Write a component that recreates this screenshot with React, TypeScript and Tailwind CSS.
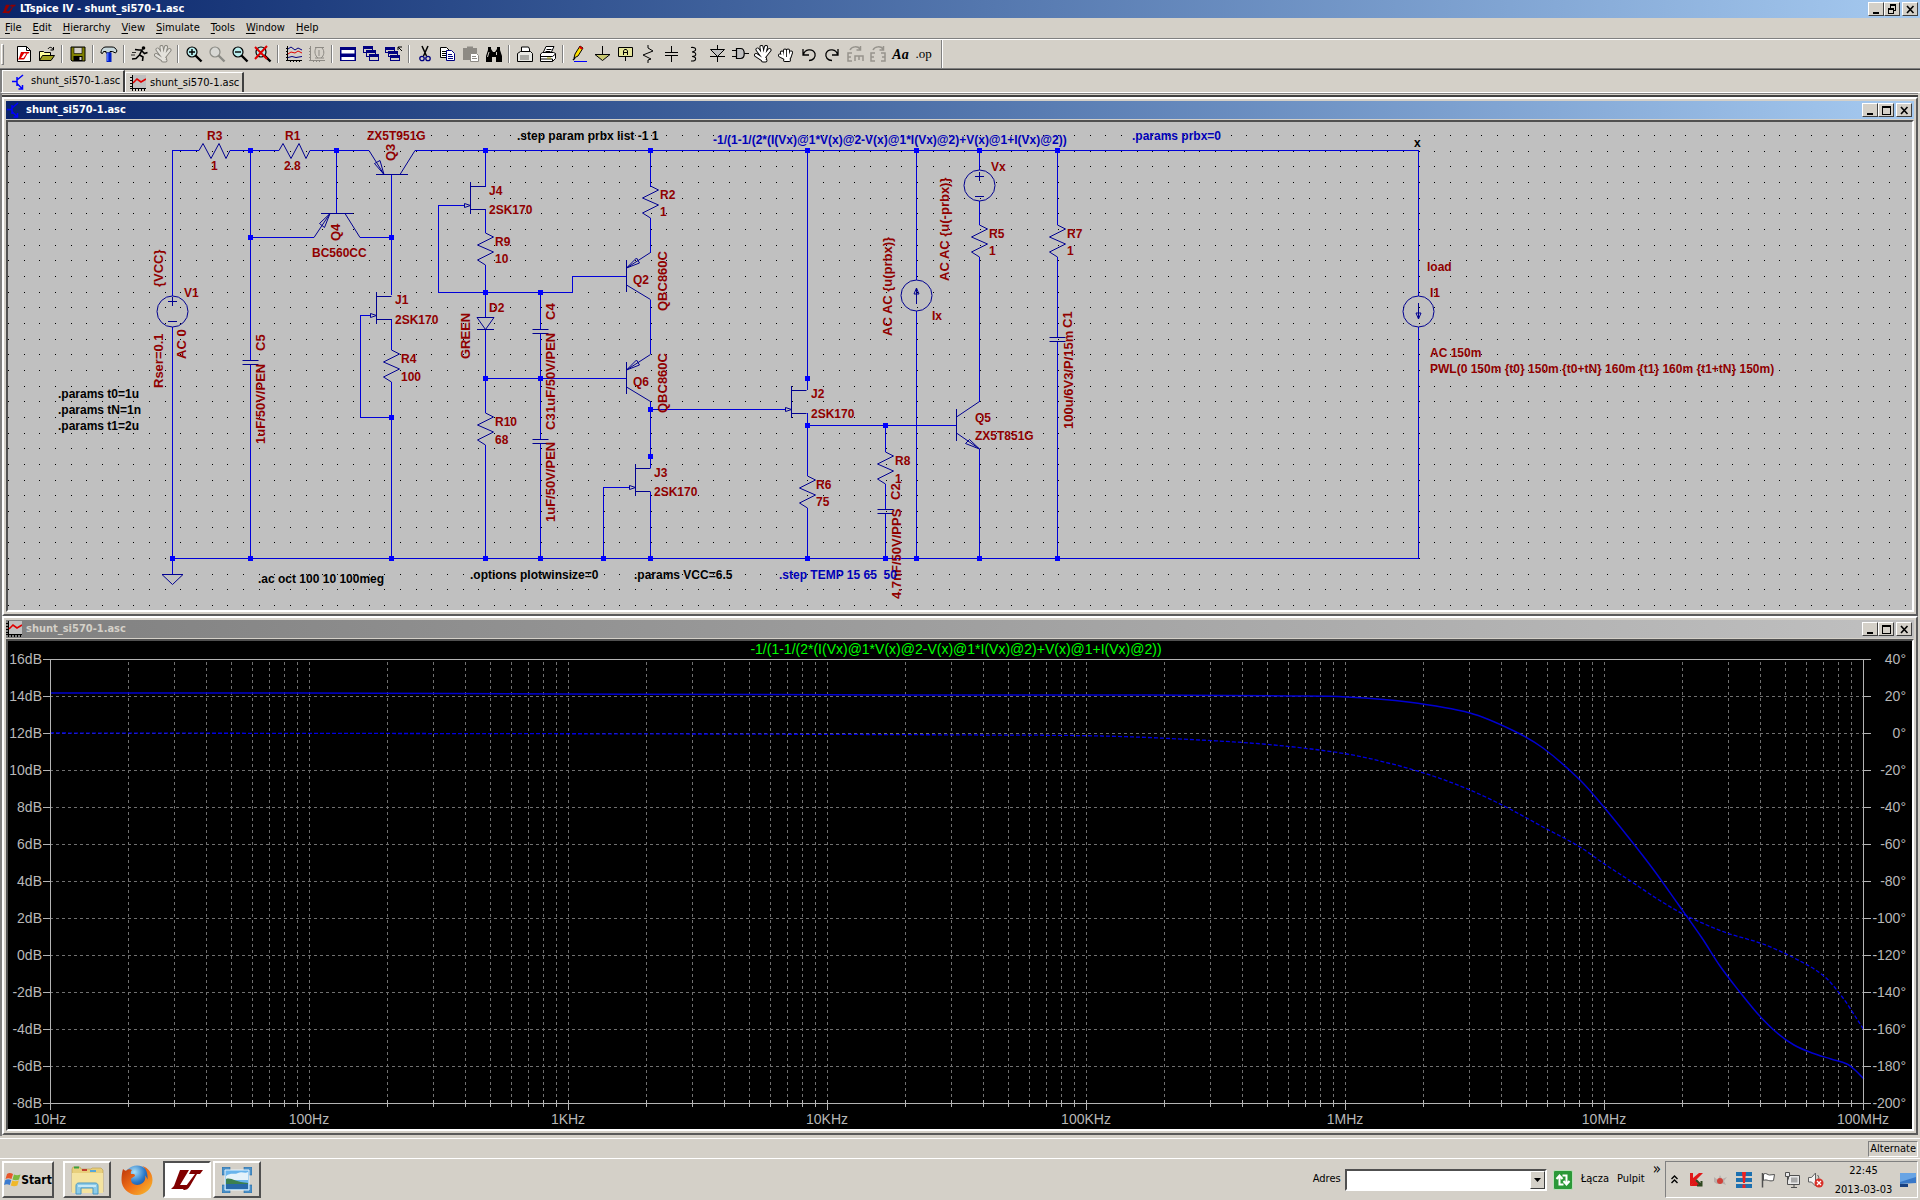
import React from "react";

type P = [number, number];

/* ---------- shared window chrome ---------- */

const RAISED = "border border-t-white border-l-white border-b-[#404040] border-r-[#404040]";
const UI = "font-['DejaVu_Sans_Condensed','DejaVu_Sans',sans-serif]";

function WinButton({ kind, label }: { kind: "min" | "max" | "restore" | "close"; label: string }) {
  return (
    <button
      type="button"
      aria-label={label}
      className={`flex h-[14px] w-4 items-center justify-center bg-[#d4d0c8] ${RAISED} ${kind === "close" ? "ml-[2px]" : ""}`}
    >
      <svg width="12" height="11" viewBox="0 0 12 11" shapeRendering="crispEdges" fill="none" stroke="#000">
        {kind === "min" && <path d="M3 9h6" strokeWidth="2" />}
        {kind === "max" && (
          <>
            <path d="M2 2h9" strokeWidth="2" />
            <path d="M2.5 2v7.500h8v-7.500" />
          </>
        )}
        {kind === "restore" && (
          <>
            <path d="M4.500 1v3M9.500 1v5.500h-1.500" />
            <path d="M4 1h6M2 5h6" strokeWidth="2" />
            <path d="M2.500 4v5.500h5v-5.500" />
          </>
        )}
        {kind === "close" && <path d="M3 2l6.500 7M9.500 2l-6.500 7" strokeWidth="1.600" shapeRendering="auto" />}
      </svg>
    </button>
  );
}

/* ---------- toolbar icons, 18 x 18 ---------- */

const NAVY = "#000080";

function Lens({ gray, children }: { gray?: boolean; children?: React.ReactNode }) {
  const c = gray ? "#8a8a84" : "#000";
  return (
    <>
      <circle cx="7" cy="7" r="5" fill={gray ? "#d8d8d4" : "#b8ecec"} stroke={c} strokeWidth="1.200" />
      <path d="M10.500 10.500l6 6" stroke={c} strokeWidth="2.400" />
      {children}
    </>
  );
}

const OPEN_HAND = "M9 12L3.500 4.500M9 12L7.500 2M9.500 12L12 2M10 12L15.500 5M8 14L2 10M8 13.500h3M9 15.500h2.500";
const FIST = "M6 12L5 7.500M8 12V5.500M11 12V5.500M12.500 12L14 7.500M8 13L3 10.500M7.500 13h4.500M8 15h4";

function Hand({ d, line = "#000", fill = "#fff" }: { d: string; line?: string; fill?: string }) {
  return (
    <g fill="none" strokeLinecap="round">
      <path d={d} stroke={line} strokeWidth="4" />
      <path d={d} stroke={fill} strokeWidth="2.200" />
    </g>
  );
}

const ICONS: Record<string, React.ReactNode> = {
  new: (
    <>
      <path d="M2.500 1.500h9l4 4v11h-13z" fill="#fff" stroke="#000" />
      <path d="M11.500 1.500v4h4" fill="none" stroke="#000" />
      <path d="M6 7h4l-4 6h3l-1 1.500h-5l1-1.500zM9.500 7h5l-1 1.500h-1l-2.500 4.500c-.5 1-1 1.500-2.500 1.500l4-6h-2z" fill="#e00000" />
    </>
  ),
  open: (
    <>
      <path d="M1.500 15.500v-9h4l1 1h6v3" fill="#ffff9c" stroke="#000" />
      <path d="M1.500 15.500l3-5h12l-3.500 5z" fill="#a0a020" stroke="#000" />
      <path d="M10 4c1.500-2.500 4-2 5 .5M15.500 2v3h-3" fill="none" stroke="#000" />
    </>
  ),
  save: (
    <>
      <path d="M2 2h14v14h-13l-1-1z" fill="#808000" stroke="#000" />
      <path d="M5 2.500h8v6h-8z" fill="#d4d0c8" stroke="#000" strokeWidth=".6" />
      <path d="M4.500 11h9v5h-9z" fill="#000" />
      <path d="M10.500 12h2v3h-2z" fill="#d4d0c8" />
    </>
  ),
  hammer: (
    <>
      <path d="M1 8c0-3.500 2-6 5-6h6c2.500 0 4 1.500 5 4l-1.500 2-3-1.500h-2.500v1.500h-4v-1.500h-2.500l-1 2z" fill="#c8d8dc" stroke="#000" />
      <path d="M6.500 7.500h5v9.500h-5z" fill="#0020c8" />
      <path d="M7 8h1.500v8h-1.500z" fill="#4868ff" />
    </>
  ),
  run: (
    <>
      <circle cx="12.500" cy="3" r="1.800" fill="#000" />
      <path d="M4 4.500l4 .5 3 0-2.500 5 3.500 2-.5 4M8.500 10l-3.500 3.500-4 .5M11 6l2.500 2.500 3-1" fill="none" stroke="#000" strokeWidth="1.600" />
      <path d="M1 7.500h4M0 10h4" stroke="#000" strokeWidth=".8" />
    </>
  ),
  halt: <Hand d={OPEN_HAND} line="#85837c" fill="#e4e2dc" />,
  zoomin: <Lens><path d="M4 7h6M7 4v6" stroke="#000" strokeWidth="1.400" /></Lens>,
  pan: <Lens gray />,
  zoomout: <Lens><path d="M4 7h6" stroke="#000" strokeWidth="1.400" /></Lens>,
  zoomfit: <Lens><path d="M1 2l12 12M13 1l-12 13" stroke="#e00000" strokeWidth="2" /></Lens>,
  wave: (
    <>
      <path d="M2.500 1v15M1 3.500h2M1 6.500h2M1 9.500h2M1 12.500h2M1 15.500h16M5.500 15v2M8.500 15v2M11.500 15v2M14.500 15v2" stroke="#000" fill="none" />
      <path d="M3 4l3-2 4 3 3-2 4 2" stroke={NAVY} fill="none" />
      <path d="M3 9l3-2 4 1 3-2 4 2" stroke="#e00000" fill="none" />
      <path d="M3 12.500l4-1 4 1 6-1" stroke={NAVY} fill="none" />
    </>
  ),
  wavegray: (
    <path d="M2.500 1v15M1 3.500h2M1 6.500h2M1 9.500h2M1 12.500h2M1 15.500h16M5.500 15v2M8.500 15v2M11.500 15v2M7 2.500h9M8 3c-2 3-1 8 2 10M14 3c3 3 2 8-1 10M7 13h9M11 5v6" stroke="#8d8a84" fill="none" />
  ),
  tile: (
    <>
      <path d="M1 2h16v14h-16z" fill={NAVY} />
      <path d="M2.500 5h13v3.500h-13zM2.500 12h13v3h-13z" fill="#fff" />
    </>
  ),
  cascade: (
    <>
      {[[1, 1], [4, 5], [7, 9]].map(([x, y]) => (
        <React.Fragment key={x}>
          <path d={`M${x} ${y}h10v7h-10z`} fill={NAVY} />
          <path d={`M${x + 1} ${y + 3}h8v3h-8z`} fill="#d4d0c8" />
        </React.Fragment>
      ))}
    </>
  ),
  closeall: (
    <>
      {[[0, 2], [3, 6], [5, 10]].map(([x, y]) => (
        <React.Fragment key={x}>
          <path d={`M${x} ${y}h10v6h-10z`} fill={NAVY} />
          <path d={`M${x + 1} ${y + 3}h8v2h-8z`} fill="#d4d0c8" />
        </React.Fragment>
      ))}
      <path d="M17 6l-4-4M13 5v-3h4" stroke="#000" fill="none" />
    </>
  ),
  cut: (
    <>
      <path d="M6 1l4.500 10M12 1l-4.500 10" stroke="#000" strokeWidth="1.500" />
      <circle cx="6" cy="13.500" r="2.200" fill="none" stroke={NAVY} strokeWidth="1.300" />
      <circle cx="12" cy="13.500" r="2.200" fill="none" stroke={NAVY} strokeWidth="1.300" />
    </>
  ),
  copy: (
    <>
      <path d="M1.500 2.500h6l3 3v7h-9z" fill="#fff" stroke="#000" />
      <path d="M3 6.500h4M3 8.500h4M3 10.500h4" stroke="#000" />
      <path d="M7.500 5.500h5l3 3v7h-8z" fill="#fff" stroke={NAVY} />
      <path d="M9 9.500h4M9 11.500h5M9 13.500h5" stroke={NAVY} />
    </>
  ),
  paste: (
    <>
      <path d="M1 3h14v12h-14z" fill="#8d8a84" />
      <path d="M5 1.500h6v3h-6z" fill="#8d8a84" />
      <path d="M8.500 8.500h6l2 2v6h-8z" fill="#fff" stroke="#8d8a84" />
      <path d="M10 11.500h4M10 13.500h5" stroke="#8d8a84" />
    </>
  ),
  find: (
    <>
      <path d="M3 2h3v2l2 3h2l2-3v-2h3v3l2 6v6h-6v-5h-4v5h-6v-6l2-6z" fill="#000" />
      <path d="M4 7l-1.500 5M11.500 7v3" stroke="#d4d0c8" />
    </>
  ),
  setup: (
    <>
      <path d="M5.500 7v-5h7l1 2v3" fill="#fff" stroke="#000" />
      <path d="M1.500 8.500l3-2h10l2 2v8h-15z" fill="#e8e8e4" stroke="#000" />
      <path d="M4 10h9v5h-9z" fill="#a8a8a4" />
    </>
  ),
  print: (
    <>
      <path d="M4 8l3-6.500h8l-3 6.500z" fill="#fff" stroke="#000" />
      <path d="M7.500 4.500h5M6.500 6.500h5" stroke="#000" />
      <path d="M1.500 9l2-1.500h11l2 1v5l-3 3h-12z" fill="#fff" stroke="#000" />
      <path d="M1.500 11.500h12l3-2.500M2 14h11.500v2.500" stroke="#000" fill="none" />
      <path d="M8 13h4" stroke="#a0a000" />
    </>
  ),
  wire: (
    <>
      <path d="M4 13l1-4 5-8 3 2-5 8z" fill="#ffe000" stroke="#000" />
      <path d="M10 1l3 2-1 1.500-3-1.500z" fill="#e00000" />
      <path d="M4 16.500h13" stroke="#0000ff" />
      <path d="M3 15l2-2" stroke="#000" strokeWidth="1.500" />
    </>
  ),
  ground: (
    <>
      <path d="M9.500 1v8" stroke="#000" />
      <path d="M2 9.500h15l-7.500 6z" fill="#c8c870" stroke="#000" />
    </>
  ),
  label: (
    <>
      <path d="M2.500 2.500h14v9h-14zM9.500 12v4" fill="#e4e49a" stroke="#000" />
      <path d="M7.500 10v-4l1-1.500h2l1 1.500v4M7.500 7.500h4" fill="none" stroke="#000" />
    </>
  ),
  res: <path d="M9 0v3l5 3-10 4 8 4-3 1v3" fill="none" stroke="#000" />,
  cap: <path d="M9.500 1v6M3 7.500h13M3 10.500h13M9.500 11v6" fill="none" stroke="#000" />,
  ind: <path d="M6 2.500c6-1 6 4 1 4.500 5 0 5 4.500 0 4.500 5 0 5 5-1 4.500" fill="none" stroke="#000" strokeWidth="1.100" />,
  diode: (
    <>
      <path d="M9.500 0v17M2 11.500h15" stroke="#000" />
      <path d="M2.500 4.500h14l-7 7z" fill="#c0c0c0" stroke="#000" />
    </>
  ),
  gate: (
    <>
      <path d="M1 5.500h4M1 11.500h4M13 8.500h5" stroke="#000" />
      <path d="M5.500 3.500h4c5 0 5 10 0 10h-4z" fill="#c0c0c0" stroke="#000" strokeWidth="1.200" />
    </>
  ),
  move: <Hand d={OPEN_HAND} />,
  drag: <Hand d={FIST} />,
  undo: <path d="M3 4v6h6M3.500 9.500c1-5 9-7 11.500-1 1 4-2 7-6 7" fill="none" stroke="#000" strokeWidth="1.300" />,
  redo: <path d="M15 4v6h-6M14.500 9.500c-1-5-9-7-11.500-1-1 4 2 7 6 7" fill="none" stroke="#000" strokeWidth="1.300" />,
  rotate: (
    <path d="M6 16h-4v-8h4M2 12h3M9 16v-5h8v5M13 11v4M4 5c2-4 8-4 10-1M14.500 1v4h-4" fill="none" stroke="#96938c" strokeWidth="1.500" />
  ),
  mirror: (
    <path d="M6 16h-4v-8h4M2 12h3M12 16h4v-8h-4M16 12h-3M4 5c2-4 8-4 10-1M14.500 1v4h-4" fill="none" stroke="#96938c" strokeWidth="1.500" />
  ),
};

const TOOL_GROUPS: [string, string][][] = [
  [["new", "New schematic"], ["open", "Open"]],
  [["save", "Save"]],
  [["hammer", "Control panel"]],
  [["run", "Run"], ["halt", "Halt"]],
  [["zoomin", "Zoom in"], ["pan", "Pan"], ["zoomout", "Zoom out"], ["zoomfit", "Zoom to fit"]],
  [["wave", "Autorange"], ["wavegray", "Pick visible traces"]],
  [["tile", "Tile windows"], ["cascade", "Cascade windows"], ["closeall", "Close all"]],
  [["cut", "Cut"], ["copy", "Copy"], ["paste", "Paste"], ["find", "Find"]],
  [["setup", "Print setup"], ["print", "Print"]],
  [
    ["wire", "Wire"], ["ground", "Ground"], ["label", "Label net"], ["res", "Resistor"], ["cap", "Capacitor"],
    ["ind", "Inductor"], ["diode", "Diode"], ["gate", "Component"], ["move", "Move"], ["drag", "Drag"],
    ["undo", "Undo"], ["redo", "Redo"], ["rotate", "Rotate"], ["mirror", "Mirror"], ["text", "Text"], ["op", "SPICE directive"],
  ],
];

function Toolbar() {
  return (
    <div role="toolbar" className="flex h-7 items-center pl-px">
      <span className="mr-2 h-[21px] w-[3px] border border-t-white border-r-[#808080] border-b-[#808080] border-l-white" />
      {TOOL_GROUPS.map((group, i) => (
        <div key={i} className="flex items-center">
          {i > 0 && <span className="mx-[3px] h-[18px] w-[2px] border-r border-l border-l-[#808080] border-r-white" />}
          {group.map(([id, label]) => (
            <button key={id} type="button" aria-label={label} className="flex h-6 w-[23px] items-center justify-center">
              {id === "text" ? (
                <span className="font-['Liberation_Serif',serif] text-[14px] font-bold italic">Aa</span>
              ) : id === "op" ? (
                <span className="font-['Liberation_Serif',serif] text-[13px]">.op</span>
              ) : (
                <svg width="18" height="18" viewBox="0 0 18 18">{ICONS[id]}</svg>
              )}
            </button>
          ))}
        </div>
      ))}
      <span className="ml-[6px] h-7 w-[2px] border-r border-l border-l-[#808080] border-r-white" />
    </div>
  );
}

/* ---------- small document icons ---------- */

function SchematicIcon() {
  return (
    <svg width="16" height="16" viewBox="0 0 16 16" fill="none" stroke="#0000ff" strokeWidth="1.500">
      <path d="M1 7.500h5M6 3v9M6 6l6-5M6 9.500l5 5M11.500 11v4h-4" />
    </svg>
  );
}

function PlotIcon() {
  return (
    <svg width="16" height="16" viewBox="0 0 16 16">
      <path d="M2 0h14v13h-14z" fill="#c0c0c0" />
      <path d="M2.500 0v16M0 2.500h2M0 5.500h2M0 8.500h2M0 11.500h2M0 13.500h16M5.500 14v2M8.500 14v2M11.500 14v2M14.500 14v2" stroke="#000" fill="none" />
      <path d="M3 8l4-4 4 3 5-3" stroke="#e00000" strokeWidth="1.600" fill="none" />
    </svg>
  );
}

/* ---------- schematic ---------- */

const GRID = (() => {
  let d = "";
  for (let r = 0; r <= 30; r++)
    for (let c = 0; c <= 121; c++)
      d += `M${Math.round(8 + c * 15.675)} ${Math.round(135 + r * 15.667) + 0.5}h1`;
  return d;
})();

const WIRES = [
  "M172 150.500H199M230 150.500H279M310 150.500H369M415 150.500H1418.500V296M172.500 150V296M172.500 327V574",
  "M172 558.500H1418.500V327M250.500 150V360M250.500 365V558M336.500 150V213M391.500 174V295M391.500 319V350M391.500 382V558",
  "M250 237.500H314M360 237.500H391M371 315.500H360.500V417.500H391M485.500 150V187M485.500 209V233M485.500 265V317M485.500 330V413M485.500 445V558",
  "M465 205.500H438.500V292.500H572.500V276.500H626M540.500 292V329M540.500 334V439M540.500 443V558M485 378.500H626",
  "M650.500 150V187M650.500 218V253M650.500 300V354M650.500 401V468M650.500 492V558M629 487.500H603.500V558M650 409.500H786",
  "M807.500 150V390M807.500 413V476M807.500 508V558M807 425.500H956M885.500 425V452M885.500 484V509M885.500 514V558",
  "M916.500 150V280M916.500 311V558M979.500 150V170M979.500 201V225M979.500 257V402M979.500 449V558M1057.500 150V225M1057.500 257V337M1057.500 342V558",
].join("");

const resV = (x: number, y: number) => `M${x} ${y}l8 4l-16 8l16 7l-16 8l8 5`;
const resH = (x: number, y: number) => `M${x} ${y}l4 -7l8 15l8 -15l7 15l4 -8`;
const capV = (x: number, y: number) => `M${x - 8} ${y}h16M${x - 8} ${y + 4}h16`;
const jfet = (x: number, y: number) =>
  `M${x} ${y}v32M${x} ${y + 4.5}h15M${x} ${y + 27.5}h15M${x - 6} ${y + 21.5}l0 4l6 -2l-6 -2z`;
const pnp = (x: number, y: number) =>
  `M${x} ${y}v32M${x} ${y + 8}L${x + 24} ${y - 7.500}M${x} ${y + 25}L${x + 24} ${y + 39.500}M${x} ${y + 8}L${x + 10} ${y - 2}L${x + 13} ${y + 3}z`;

const PARTS = [
  resH(199, 150.5), resH(279, 150.5), resV(391.5, 350), resV(485.5, 233), resV(485.5, 413), resV(650.5, 186),
  resV(807.5, 476), resV(885.5, 452), resV(979.5, 225), resV(1057.5, 225),
  capV(250.5, 360.5), capV(540.5, 329.5), capV(540.5, 439.5), capV(885.5, 509.5), capV(1057.5, 337.5),
  jfet(376.5, 292), jfet(470.5, 182), jfet(635.5, 464), jfet(791.5, 386),
  pnp(626.5, 260), pnp(626.5, 362),
  "M376 174.500H408M369 150.500L384 174.500L380 160.500L374.500 163.500L384 174.500M400 174.500L415 150.500",
  "M321 213.500H353M314 237.500L330 213.500L319.500 223.500L324.500 227.500L330 213.500M345 213.500L360 237.500",
  "M956.500 409V441M956.500 417L979.500 401.500M956.500 433L979.500 449L969.500 439.500L965.500 443.500L979.500 449",
  "M477 317.500H494L485.500 329.500ZM477 329.500H494",
  "M168 301.500H177M172.500 297V306M168 321.500H177M975 176.500H984M979.500 172V181M975 196.500H984",
  "M916.500 304V288L914 294H919L916.500 288M1418.500 303V319L1416 313H1421L1418.500 319",
  "M162 574.500H183L172.500 584.500Z",
].join("");

const NODES: P[] = [
  ...[250, 336, 485, 650, 807, 916, 979, 1057].map((x): P => [x, 150]),
  ...[172, 250, 391, 485, 540, 603, 650, 807, 885, 916, 979, 1057].map((x): P => [x, 558]),
  [250, 237], [391, 237], [391, 417], [485, 292], [540, 292], [485, 378], [540, 378],
  [650, 409], [650, 456], [807, 378], [807, 425], [885, 425],
];

const RED_LABELS: [number, number, string][] = [
  [207, 140, "R3"], [211, 170, "1"], [285, 140, "R1"], [284, 170, "2.8"], [367, 140, "ZX5T951G"], [312, 257, "BC560CC"],
  [184, 297, "V1"], [395, 304, "J1"], [395, 324, "2SK170"], [401, 363, "R4"], [401, 381, "100"],
  [489, 195, "J4"], [489, 214, "2SK170"], [495, 246, "R9"], [495, 263, "10"], [489, 312, "D2"],
  [495, 426, "R10"], [495, 444, "68"], [660, 199, "R2"], [660, 216, "1"], [633, 284, "Q2"], [633, 386, "Q6"],
  [654, 477, "J3"], [654, 496, "2SK170"], [811, 398, "J2"], [811, 418, "2SK170"], [816, 489, "R6"], [816, 506, "75"],
  [895, 465, "R8"], [895, 483, "1"], [991, 171, "Vx"], [989, 238, "R5"], [989, 255, "1"], [1067, 238, "R7"],
  [1067, 255, "1"], [932, 320, "Ix"], [975, 422, "Q5"], [975, 440, "ZX5T851G"], [1427, 271, "load"],
  [1430, 297, "I1"], [1430, 357, "AC 150m"],
  [1430, 373, "PWL(0 150m {t0} 150m {t0+tN} 160m {t1} 160m {t1+tN} 150m)"],
];

const VERTICAL_LABELS: [number, number, string][] = [
  [163, 287, "{VCC}"], [186, 359, "AC 0"], [163, 388, "Rser=0.1"], [265, 351, "C5"], [265, 444, "1uF/50V/PEN"],
  [395, 161, "Q3"], [340, 241, "Q4"], [470, 359, "GREEN"], [555, 320, "C4"], [555, 413, "1uF/50V/PEN"],
  [555, 430, "C3"], [555, 522, "1uF/50V/PEN"], [667, 311, "QBC860C"], [667, 413, "QBC860C"],
  [892, 336, "AC AC {u(prbx)}"], [949, 281, "AC AC {u(-prbx)}"], [1072, 328, "C1"], [1073, 429, "100u/6V3/P/15m"],
  [900, 500, "C2"], [901, 599, "4.7nF/50V/PPS"],
];

const DIRECTIVES: [number, number, string, boolean][] = [
  [517, 140, ".step param prbx list -1 1", false],
  [713, 144, "-1/(1-1/(2*(I(Vx)@1*V(x)@2-V(x)@1*I(Vx)@2)+V(x)@1+I(Vx)@2))", true],
  [1132, 140, ".params prbx=0", true],
  [1414, 147, "x", false],
  [58, 398, ".params t0=1u", false], [58, 414, ".params tN=1n", false], [58, 430, ".params t1=2u", false],
  [258, 583, ".ac oct 100 10 100meg", false], [470, 579, ".options plotwinsize=0", false],
  [634, 579, ".params VCC=6.5", false], [779, 579, ".step TEMP 15 65  50", true],
];

function Schematic() {
  return (
    <svg className="block h-[488px] w-full bg-[#c0c0c0] font-['Liberation_Sans',Arial,sans-serif] text-[12px] font-bold">
      <g transform="translate(-8 -122)">
        <path d={GRID} stroke="#000" shapeRendering="crispEdges" />
        <path d={WIRES} stroke="#0000d8" fill="none" shapeRendering="crispEdges" />
        <g stroke="#000090" fill="none" strokeWidth="1">
          <path d={PARTS} />
          <circle cx="172.500" cy="311.500" r="15.500" />
          <circle cx="916.500" cy="295.500" r="15.500" />
          <circle cx="979.500" cy="185.500" r="15.500" />
          <circle cx="1418.500" cy="311.500" r="15.500" />
        </g>
        {NODES.map(([x, y]) => (
          <rect key={`${x}-${y}`} x={x - 2} y={y - 2} width="5" height="5" fill="#0000ff" />
        ))}
        <g fill="#900000">
          {RED_LABELS.map(([x, y, t]) => (
            <text key={`${x}-${y}`} x={x} y={y}>{t}</text>
          ))}
        </g>
        <g fill="#900000" className="text-[13px]">
          {VERTICAL_LABELS.map(([x, y, t]) => (
            <text key={`${x}-${y}`} transform={`translate(${x} ${y}) rotate(-90)`}>{t}</text>
          ))}
        </g>
        {DIRECTIVES.map(([x, y, t, blue]) => (
          <text key={`${x}-${y}`} x={x} y={y} fill={blue ? "#0000b8" : "#000"} className="whitespace-pre">{t}</text>
        ))}
      </g>
    </svg>
  );
}

/* ---------- waveform plot ---------- */

const X0 = 50;
const X1 = 1863;
const Y0 = 659;
const Y1 = 1103;
const DECADE = 259;
const ROW = 37;

const GAIN: P[] = [
  [50, 693], [300, 693], [560, 694], [900, 695], [1150, 695], [1290, 696], [1347, 697], [1408, 702], [1470, 713],
  [1512, 730], [1543, 748], [1580, 780], [1603, 806], [1629, 838], [1653, 869], [1678, 904], [1702, 938], [1720, 966],
  [1739, 991], [1757, 1013], [1776, 1032], [1794, 1045], [1812, 1053], [1831, 1059], [1847, 1064], [1855, 1070], [1864, 1079],
];
const PHASE: P[] = [
  [50, 733], [700, 734], [980, 735], [1102, 736], [1200, 740], [1274, 745], [1347, 754], [1396, 765], [1433, 776],
  [1470, 790], [1506, 807], [1543, 827], [1580, 847], [1603, 863], [1635, 884], [1659, 900], [1687, 916], [1727, 933],
  [1763, 944], [1800, 961], [1825, 977], [1843, 998], [1855, 1016], [1864, 1030],
];

function smooth(p: P[]) {
  let d = `M${p[0][0]} ${p[0][1]}`;
  for (let i = 0; i < p.length - 1; i++) {
    const a = p[Math.max(0, i - 1)];
    const b = p[i];
    const c = p[i + 1];
    const e = p[Math.min(p.length - 1, i + 2)];
    const w = (c[0] - b[0]) / 3;
    const s1 = (c[1] - a[1]) / (c[0] - a[0]);
    const s2 = (e[1] - b[1]) / (e[0] - b[0]);
    d += `C${b[0] + w} ${b[1] + w * s1} ${c[0] - w} ${c[1] - w * s2} ${c[0]} ${c[1]}`;
  }
  return d;
}

const rows = Array.from({ length: 13 }, (_, i) => i);
const decades = ["10Hz", "100Hz", "1KHz", "10KHz", "100KHz", "1MHz", "10MHz", "100MHz"];

const GRID_V = decades
  .slice(0, 7)
  .flatMap((_, d) => [1, 2, 3, 4, 5, 6, 7, 8, 9].map((k) => Math.round(X0 + DECADE * (d + Math.log10(k)))))
  .filter((x) => x > X0);

function Plot() {
  return (
    <svg className="block h-[488px] w-full bg-black font-['Liberation_Sans',Arial,sans-serif] text-[14px]">
      <g transform="translate(-8 -641)">
        <g stroke="#707070" strokeDasharray="3 3" shapeRendering="crispEdges" fill="none">
          <path d={GRID_V.map((x) => `M${x + 0.5} ${Y0 + 3}V${Y1}`).join("")} />
          <path d={rows.slice(1, 12).map((i) => `M${X0} ${Y0 + i * ROW + 0.5}H${X1}`).join("")} />
        </g>
        <path d={smooth(GAIN)} fill="none" stroke="#0000d0" strokeWidth="1.500" />
        <path d={smooth(PHASE)} fill="none" stroke="#0000e0" strokeWidth="1.300" strokeDasharray="4 2" />
        <g stroke="#b4b4b4" fill="none" shapeRendering="crispEdges">
          <path d={`M43 ${Y0 + 0.5}H1871M43 ${Y1 + 0.5}H1871M${X0 + 0.5} ${Y0}V1110M${X1 + 0.5} ${Y0}V1110`} />
          <path d={rows.map((i) => `M43 ${Y0 + i * ROW + 0.5}H${X0}M${X1} ${Y0 + i * ROW + 0.5}H1871`).join("")} />
          <path d={GRID_V.map((x) => `M${x + 0.5} 1100V${(x - X0) % DECADE === 0 ? 1110 : 1107}`).join("")} />
        </g>
        <g fill="#b8b8b8">
          {rows.map((i) => (
            <React.Fragment key={i}>
              <text x="42" y={Y0 + i * ROW + 5} textAnchor="end">{`${16 - 2 * i}dB`}</text>
              <text x="1906" y={Y0 + i * ROW + 5} textAnchor="end">{`${40 - 20 * i}°`}</text>
            </React.Fragment>
          ))}
          {decades.map((t, i) => (
            <text key={t} x={X0 + i * DECADE} y="1124" textAnchor="middle">{t}</text>
          ))}
        </g>
        <text x="956" y="654" textAnchor="middle" fill="#00ff00">
          -1/(1-1/(2*(I(Vx)@1*V(x)@2-V(x)@1*I(Vx)@2)+V(x)@1+I(Vx)@2))
        </text>
      </g>
    </svg>
  );
}

function DocWindow({ active, icon, children }: { active: boolean; icon: React.ReactNode; children: React.ReactNode }) {
  return (
    <section className="border-2 border-t-white border-r-[#5a5a5a] border-b-[#5a5a5a] border-l-white bg-[#d4d0c8] p-[2px]">
      <header
        className={`flex h-[18px] items-center gap-1 pr-[2px] pl-1 text-[11px] font-bold ${
          active
            ? "bg-linear-to-r from-[#0a246a] to-[#a6caf0] text-white"
            : "bg-linear-to-r from-[#808080] to-[#c0c0c0] text-[#d4d0c8]"
        }`}
      >
        <span className="-ml-1">{icon}</span>
        <h2 className="flex-1">shunt_si570-1.asc</h2>
        <div className="flex">
          <WinButton kind="min" label="Minimize document" />
          <WinButton kind="max" label="Maximize document" />
          <WinButton kind="close" label="Close document" />
        </div>
      </header>
      <div className="mt-px border-2 border-t-[#505050] border-r-white border-b-white border-l-[#505050]">{children}</div>
    </section>
  );
}

/* ---------- taskbar ---------- */

function WindowsFlag() {
  return (
    <svg width="17" height="16" viewBox="0 0 17 16">
      <path d="M3 2c2-1.500 4-1 6 0l-1.500 5c-2-1-4-1.200-6 0z" fill="#e8562a" />
      <path d="M10 2.500c2 1 4 1 6.500 0l-1.500 5c-2 1-4.500 1-6.500 0z" fill="#7cb83c" />
      <path d="M1.300 8c2-1.300 4-1 6 0l-1.500 5c-2-1-3.800-1-5.800 0z" fill="#3c7cd0" />
      <path d="M8.300 8.500c2 1 4 1 6.500 0l-1.500 5c-2 1-4.500 1-6.500 0z" fill="#f0b828" />
    </svg>
  );
}

function FolderIcon() {
  return (
    <svg width="34" height="30" viewBox="0 0 34 30">
      <path d="M2 4l1-2h7l1 2h10l1-1h9l2 2v22h-31z" fill="#e8cf7c" stroke="#b89a48" strokeWidth=".6" />
      <path d="M4 1.500h5v2h-5z" fill="#3aa040" />
      <path d="M12 4h5v2h-5z" fill="#c04030" />
      <path d="M20 5h6v2h-6z" fill="#58a8d8" />
      <path d="M2 8h31v20h-31z" fill="#f4e3a0" />
      <path d="M6 29v-8c0-2 1-3 3-3h16c2 0 3 1 3 3v8h-5v-6h-12v6z" fill="#8ccbe8" stroke="#4a98c4" />
      <path d="M8 21h18" stroke="#d8f2fc" strokeWidth="1.500" />
    </svg>
  );
}

function FirefoxIcon() {
  return (
    <svg width="32" height="32" viewBox="0 0 32 32">
      <defs>
        <radialGradient id="globe" cx=".4" cy=".25" r=".8">
          <stop offset="0" stopColor="#a8e0f8" />
          <stop offset=".5" stopColor="#2a78c8" />
          <stop offset="1" stopColor="#0c2c78" />
        </radialGradient>
        <linearGradient id="fox" x1="0" y1="0" x2="1" y2="1">
          <stop offset="0" stopColor="#b83008" />
          <stop offset=".5" stopColor="#f07018" />
          <stop offset="1" stopColor="#f8c030" />
        </linearGradient>
      </defs>
      <circle cx="16" cy="14.500" r="13" fill="url(#globe)" />
      <path d="M2 5c1 1 2 2 3.500 1.500C7 5 9 5 11 6c-1 1-1.500 2.500-1 4 2-.3 4 0 4 1.500-1 2-4 2-4 4 0 4 4 6.500 9 5 4-1.500 6-5 5-9 1 1 2 2 2.500 4C27 9 25 4 21 2c6 1.500 10.500 7 10.500 14 0 8-7 15-15.500 15S.5 24 .5 16C.5 12 1 8 2 5z" fill="url(#fox)" />
    </svg>
  );
}

function LtIcon() {
  return (
    <svg width="32" height="22" viewBox="0 0 32 22" fill="#800000">
      <path d="M9 1h9l-9 15h9l-3 4h-15l3-3z" />
      <path d="M20 1h12l-3 4h-3l-7 12c-2 3-3 4-7 4l12-16h-6z" />
    </svg>
  );
}

function PictureIcon() {
  return (
    <svg width="30" height="26" viewBox="0 0 30 26">
      <path d="M0 0h8v8h-8zM22 0h8v8h-8zM0 18h8v8h-8zM22 18h8v8h-8z" fill="#4a90c8" stroke="#2868a0" strokeWidth=".6" />
      <path d="M3 3h24v20h-24z" fill="#68b4ec" stroke="#e8f4fc" />
      <path d="M4 9c5-4 8-1 12-3s7 1 10-1v8h-22z" fill="#e4f2fa" />
      <path d="M4 12c5-2 9 3 22 4v2h-22z" fill="#3c8050" />
      <path d="M4 17h22v5h-22z" fill="#2868a8" />
    </svg>
  );
}

function Taskbar() {
  const task = "flex h-[37px] w-12 items-center justify-center border-2 border-t-white border-l-white border-b-[#505050] border-r-[#505050]";
  return (
    <footer className="flex h-[42px] items-center border-t border-white pl-[2px] text-[11px]">
      <button type="button" className="flex h-[37px] w-[52px] items-center justify-center border-2 border-t-white border-r-[#505050] border-b-[#505050] border-l-white text-[12px] font-bold">
        <WindowsFlag />
        Start
      </button>
      <button type="button" aria-label="Explorer" className={`ml-[9px] ${task}`}><FolderIcon /></button>
      <button type="button" aria-label="Firefox" className="flex w-[52px] items-center justify-center"><FirefoxIcon /></button>
      <button type="button" aria-label="LTspice" className="flex h-[37px] w-12 items-center justify-center border-2 border-t-[#505050] border-r-white border-b-white border-l-[#505050] bg-white"><LtIcon /></button>
      <button type="button" aria-label="Pictures" className={`ml-[2px] ${task}`}><PictureIcon /></button>

      <div className="ml-auto flex items-center">
        <label htmlFor="address" className="mr-1">Adres</label>
        <div className="flex h-[22px] w-[202px] border-2 border-t-[#505050] border-r-white border-b-white border-l-[#505050] bg-white">
          <input id="address" className="min-w-0 flex-1 px-1 outline-none" />
          <button type="button" aria-label="Show addresses" className={`flex w-[15px] items-center justify-center bg-[#d4d0c8] ${RAISED}`}>
            <svg width="7" height="4" viewBox="0 0 7 4"><path d="M0 0h7l-3.500 4z" /></svg>
          </button>
        </div>
        <button type="button" aria-label="Refresh" className="ml-[6px] flex h-5 w-5 items-center justify-center rounded-[2px] border border-[#b8e0b8] bg-[#2a9838]">
          <svg width="16" height="14" viewBox="0 0 16 14" fill="none" stroke="#fff" strokeWidth="2">
            <path d="M8.500 11.500h-4v-8M1.500 6l3-3.500 3 3.500M7.500 2.500h4v8M8.500 8l3 3.500 3-3.500" />
          </svg>
        </button>
        <a href="#lacza" className="ml-2">Łącza</a>
        <a href="#pulpit" className="ml-2">Pulpit</a>
        <button type="button" aria-label="More links" className="mr-1 mb-5 ml-2 text-[15px] leading-none">»</button>
      </div>

      <div className="mr-[2px] flex h-[37px] items-center border border-t-[#808080] border-r-white border-b-white border-l-[#808080] pr-px pl-[5px]">
        <button type="button" aria-label="Show hidden icons" className="w-[9px]">
          <svg width="7" height="9" viewBox="0 0 7 9" fill="none" stroke="#000" strokeWidth="1.400"><path d="M.5 4L3.500 1l3 3M.5 8l3-3 3 3" /></svg>
        </button>
        <div className="ml-1 flex">
          <span className="flex w-6 items-center justify-center">
            <svg width="15" height="16" viewBox="0 0 15 16">
              <path d="M1 1h3v5l6-5h4l-7 7-6 6z" fill="#e01818" />
              <path d="M1 14l5-6 7 6z" fill="#e01818" />
              <path d="M7 8l5 5M12.500 9v4.500h-4.500" stroke="#304820" strokeWidth="2" fill="none" />
            </svg>
          </span>
          <span className="flex w-6 items-center justify-center">
            <svg width="15" height="14" viewBox="0 0 15 14">
              <path d="M1 4l4 3 2-5 2 4 5-2-3 4 2 4-5-2-4 1-3-2z" fill="#b8b0ac" />
              <circle cx="7" cy="8" r="3" fill="#d04038" />
            </svg>
          </span>
          <span className="flex w-6 items-center justify-center">
            <svg width="16" height="16" viewBox="0 0 16 16">
              <path d="M0 0h16v4h-16zM0 6h16v4h-16zM0 12h16v4h-16z" fill="#1c70b0" />
              <path d="M6 0h4l-1 11h-2zM6.500 12.500h3v3.500h-3z" fill="#f02020" />
            </svg>
          </span>
          <span className="flex w-6 items-center justify-center">
            <svg width="16" height="16" viewBox="0 0 16 16" fill="#fff" stroke="#505050">
              <path d="M2.500 1v14.500" strokeWidth="1.500" />
              <path d="M3.500 2c3-1.500 4 1 6 1s3-.5 5-.5l-1 6c-2 .5-3 .5-5 0s-3-1-5 0z" />
            </svg>
          </span>
          <span className="flex w-6 items-center justify-center">
            <svg width="16" height="16" viewBox="0 0 16 16" fill="#e8e8e8" stroke="#505050">
              <path d="M4.500 3.500h11v9h-11zM7 15.500h6M10 13v2" />
              <path d="M1.500 .5h4v4h-4zM3.500 5v7.500h3" />
              <path d="M7 5.500h6.500v5h-6.500z" fill="#a8a8a8" stroke="none" />
            </svg>
          </span>
          <span className="flex w-6 items-center justify-center">
            <svg width="16" height="16" viewBox="0 0 16 16">
              <path d="M.5 5.500h3l4-4.500v13l-4-4h-3z" fill="#f4f4f4" stroke="#606060" />
              <path d="M9.500 3c1.500 1.500 1.500 3 1 4" stroke="#606060" fill="none" />
              <circle cx="11" cy="11" r="4.500" fill="#d83028" />
              <path d="M9 9l4 4M13 9l-4 4" stroke="#fff" strokeWidth="1.300" />
            </svg>
          </span>
        </div>
        <div className="w-[71px] text-center leading-[19px]">
          <div>22:45</div>
          <div>2013-03-03</div>
        </div>
        <svg className="ml-px" width="16" height="16" viewBox="0 0 16 16">
          <path d="M0 1h16v10l-16 1z" fill="#3878c8" />
          <path d="M0 1h16v4l-16 5z" fill="#68a4e4" />
          <path d="M0 12h8v3h-8z" fill="#184080" />
        </svg>
      </div>
    </footer>
  );
}

const MENU = ["File", "Edit", "Hierarchy", "View", "Simulate", "Tools", "Window", "Help"];

export default function App() {
  return (
    <div className={`flex min-h-screen flex-col overflow-hidden bg-[#d4d0c8] text-black ${UI}`}>
      <header className="flex h-[18px] items-center bg-linear-to-r from-[#0a246a] to-[#a6caf0] pr-[2px] pl-[2px] text-[11px] font-bold text-white">
        <svg className="mr-1" width="14" height="12" viewBox="0 0 32 22" fill="#900000">
          <path d="M9 1h9l-9 15h9l-3 4h-15l3-3z" />
          <path d="M20 1h12l-3 4h-3l-7 12c-2 3-3 4-7 4l12-16h-6z" />
        </svg>
        <h1 className="flex-1">LTspice IV - shunt_si570-1.asc</h1>
        <div className="flex">
          <WinButton kind="min" label="Minimize" />
          <WinButton kind="restore" label="Restore" />
          <WinButton kind="close" label="Close" />
        </div>
      </header>

      <nav className="flex h-5 items-center gap-[11px] pl-[5px] text-[11px]">
        {MENU.map((m) => (
          <button key={m} type="button">
            <span className="underline underline-offset-2">{m[0]}</span>
            {m.slice(1)}
          </button>
        ))}
      </nav>
      <div className="h-[2px] border-t border-b border-t-[#808080] border-b-white" />
      <Toolbar />
      <div className="h-[2px] border-t border-b border-t-[#808080] border-b-[#404040]" />

      <div role="tablist" className="flex h-[23px] items-end border-b border-l-2 border-b-white border-l-[#808080] text-[11px]">
        <button role="tab" aria-selected="true" type="button" className="flex h-[22px] w-[123px] items-center gap-1 border-t border-r-2 border-l border-t-white border-r-[#404040] border-l-white pl-2">
          <SchematicIcon />
          shunt_si570-1.asc
        </button>
        <button role="tab" aria-selected="false" type="button" className="flex h-5 w-[119px] items-center gap-1 border-t border-r-2 border-l border-t-white border-r-[#404040] border-l-white pt-px pl-1">
          <PlotIcon />
          shunt_si570-1.asc
        </button>
      </div>

      <main className="mb-[2px] flex flex-1 flex-col border-l-2 border-l-[#808080] pr-[2px]">
        <div className="h-1 border-t border-b-2 border-t-[#808080] border-b-[#404040]" />
        <DocWindow active icon={<SchematicIcon />}>
          <Schematic />
        </DocWindow>
        <DocWindow active={false} icon={<PlotIcon />}>
          <Plot />
        </DocWindow>
      </main>

      <div role="status" className="flex h-5 items-center justify-end border-t border-white pr-[2px] text-[11px]">
        <span className="border border-t-[#808080] border-r-white border-b-white border-l-[#808080] px-px leading-[14px]">Alternate</span>
      </div>
      <Taskbar />
    </div>
  );
}
